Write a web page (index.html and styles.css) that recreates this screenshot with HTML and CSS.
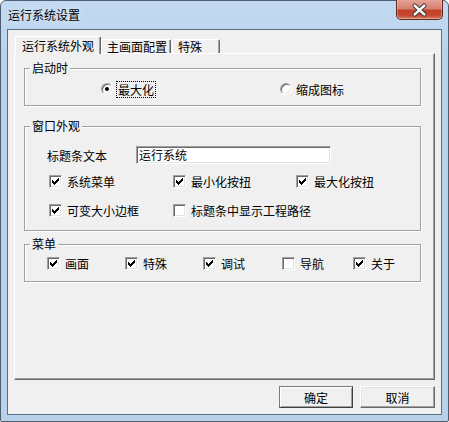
FILE: index.html
```html
<!DOCTYPE html>
<html lang="zh-CN">
<head>
    <meta charset="UTF-8">
    <meta name="viewport" content="width=device-width, initial-scale=1.0">
    <title>运行系统设置</title>
    <link rel="stylesheet" href="styles.css">
</head>
<body>
    <div class="window">
        <div class="titlebar">
            <span class="title">运行系统设置</span>
            <button class="close-btn" title="关闭">
                <svg width="47" height="20" viewBox="0 0 47 20">
                    <path d="M18.5 5.5 L28.5 14.5 M28.5 5.5 L18.5 14.5" stroke="#3a3a3a" stroke-width="4.6" stroke-linecap="round" fill="none"/>
                    <path d="M18.5 5.5 L28.5 14.5 M28.5 5.5 L18.5 14.5" stroke="#fff" stroke-width="2.6" stroke-linecap="round" fill="none"/>
                </svg>
            </button>
        </div>

        <div class="client">
            <!-- Tab strip -->
            <div class="tabs">
                <div class="tab active">运行系统外观</div>
                <div class="tab">主画面配置</div>
                <div class="tab last">特殊</div>
            </div>

            <div class="page">
                <!-- Startup -->
                <fieldset class="group">
                    <legend>启动时</legend>
                    <div class="startup">
                        <label class="radio-item wide">
                            <span class="radio checked"></span>
                            <span class="focus">最大化</span>
                        </label>
                        <label class="radio-item">
                            <span class="radio"></span>
                            <span>缩成图标</span>
                        </label>
                    </div>
                </fieldset>

                <!-- Window appearance -->
                <fieldset class="group appearance">
                    <legend>窗口外观</legend>
                    <div class="title-row">
                        <span class="field-label">标题条文本</span>
                        <div class="textbox">运行系统</div>
                    </div>
                    <div class="check-grid">
                        <label class="check-item"><span class="check"><svg class="tick" viewBox="0 0 7 7"><path d="M0 2 H1 V3 H2 V4 H3 V3 H4 V2 H5 V1 H6 V0 H7 V3 H6 V4 H5 V5 H4 V6 H3 V7 H2 V6 H1 V5 H0 Z"/></svg></span>系统菜单</label>
                        <label class="check-item"><span class="check"><svg class="tick" viewBox="0 0 7 7"><path d="M0 2 H1 V3 H2 V4 H3 V3 H4 V2 H5 V1 H6 V0 H7 V3 H6 V4 H5 V5 H4 V6 H3 V7 H2 V6 H1 V5 H0 Z"/></svg></span>最小化按扭</label>
                        <label class="check-item"><span class="check"><svg class="tick" viewBox="0 0 7 7"><path d="M0 2 H1 V3 H2 V4 H3 V3 H4 V2 H5 V1 H6 V0 H7 V3 H6 V4 H5 V5 H4 V6 H3 V7 H2 V6 H1 V5 H0 Z"/></svg></span>最大化按扭</label>
                        <label class="check-item"><span class="check"><svg class="tick" viewBox="0 0 7 7"><path d="M0 2 H1 V3 H2 V4 H3 V3 H4 V2 H5 V1 H6 V0 H7 V3 H6 V4 H5 V5 H4 V6 H3 V7 H2 V6 H1 V5 H0 Z"/></svg></span>可变大小边框</label>
                        <label class="check-item"><span class="check"></span>标题条中显示工程路径</label>
                    </div>
                </fieldset>

                <!-- Menus -->
                <fieldset class="group menus">
                    <legend>菜单</legend>
                    <div class="menu-row">
                        <label class="check-item w78"><span class="check"><svg class="tick" viewBox="0 0 7 7"><path d="M0 2 H1 V3 H2 V4 H3 V3 H4 V2 H5 V1 H6 V0 H7 V3 H6 V4 H5 V5 H4 V6 H3 V7 H2 V6 H1 V5 H0 Z"/></svg></span>画面</label>
                        <label class="check-item w78"><span class="check"><svg class="tick" viewBox="0 0 7 7"><path d="M0 2 H1 V3 H2 V4 H3 V3 H4 V2 H5 V1 H6 V0 H7 V3 H6 V4 H5 V5 H4 V6 H3 V7 H2 V6 H1 V5 H0 Z"/></svg></span>特殊</label>
                        <label class="check-item w79"><span class="check"><svg class="tick" viewBox="0 0 7 7"><path d="M0 2 H1 V3 H2 V4 H3 V3 H4 V2 H5 V1 H6 V0 H7 V3 H6 V4 H5 V5 H4 V6 H3 V7 H2 V6 H1 V5 H0 Z"/></svg></span>调试</label>
                        <label class="check-item w71"><span class="check"></span>导航</label>
                        <label class="check-item"><span class="check"><svg class="tick" viewBox="0 0 7 7"><path d="M0 2 H1 V3 H2 V4 H3 V3 H4 V2 H5 V1 H6 V0 H7 V3 H6 V4 H5 V5 H4 V6 H3 V7 H2 V6 H1 V5 H0 Z"/></svg></span>关于</label>
                    </div>
                </fieldset>
            </div>

            <div class="actions">
                <button class="btn default">确定</button>
                <button class="btn">取消</button>
            </div>
        </div>
    </div>
</body>
</html>
```

FILE: styles.css
```css
body {
    margin: 0;
    background: #fff;
    font-family: "Noto Sans CJK SC", "Liberation Sans", sans-serif;
    font-size: 12px;
    color: #000;
}

.window {
    width: 449px;
    height: 422px;
    box-sizing: border-box;
    border: 1px solid #4d5d6e;
    border-radius: 6px 6px 2px 2px;
    background: linear-gradient(#c3daf2, #b9d2ec 60px);
    padding: 0 6px 6px 6px;
    display: flex;
    flex-direction: column;
}

.titlebar {
    height: 28px;
    display: flex;
    justify-content: space-between;
    align-items: flex-start;
    margin: 0 -6px;
}

.title {
    margin: 6px 0 0 7px;
    line-height: 16px;
    text-shadow: 0 0 6px #e6f0fa;
}

.close-btn {
    width: 47px;
    height: 20px;
    margin: -1px 5px 0 0;
    padding: 0;
    border: 1px solid #5e2a22;
    border-top: none;
    border-radius: 0 0 5px 5px;
    background: linear-gradient(#e6a395, #d88070 45%, #c24229 55%, #c9472f 80%, #d97a62);
    box-shadow: inset 0 -1px 0 rgba(255, 255, 255, 0.35), inset 1px 0 0 rgba(255, 255, 255, 0.25), inset -1px 0 0 rgba(255, 255, 255, 0.25);
    display: flex;
    cursor: pointer;
}

.client {
    flex: 1;
    border: 1px solid #5e6e7e;
    background: #f0f0f0;
    display: flex;
    flex-direction: column;
}

/* tabs */
.tabs {
    height: 17px;
    margin: 6px 0 0 7px;
    display: flex;
    align-items: flex-end;
}

.tab {
    height: 14px;
    box-sizing: border-box;
    padding-left: 5px;
    border-style: solid;
    border-width: 1px 1px 0 1px;
    border-color: #fff #696969 #fff #fff;
    box-shadow: inset -1px 0 #a0a0a0;
    border-radius: 2px 2px 0 0;
    background: #f0f0f0;
    line-height: 14px;
    width: 70px;
    white-space: nowrap;
}

.tab.active {
    width: 86px;
    height: 18px;
    margin-bottom: -1px;
    padding: 2px 0 0 6px;
    position: relative;
    z-index: 1;
}

.tab.last {
    width: 48px;
    margin-left: 1px;
}

.page {
    width: 421px;
    height: 327px;
    box-sizing: border-box;
    margin-left: 6px;
    border: 1px solid;
    border-color: #fff #696969 #696969 #fff;
    box-shadow: inset -1px -1px #a0a0a0;
    padding-top: 7px;
}

/* group boxes */
.group {
    width: 397px;
    box-sizing: border-box;
    margin: 0 0 0 9px;
    padding: 0;
    border: 1px solid #a0a0a0;
    box-shadow: inset 1px 1px #fff, 1px 1px #fff;
    min-width: 0;
}

.group legend {
    margin-left: 5px;
    padding: 0 2px;
    line-height: 14px;
    background: #f0f0f0;
}

.startup {
    display: flex;
    align-items: center;
    height: 14px;
    padding: 7px 0 9px 76px;
}

.radio-item {
    display: flex;
    align-items: center;
    gap: 4px;
    line-height: 13px;
}

.radio-item.wide {
    width: 179px;
}

.radio {
    width: 12px;
    height: 12px;
    box-sizing: border-box;
    border-radius: 50%;
    border: 1px solid;
    border-color: #a0a0a0 #fff #fff #a0a0a0;
    box-shadow: inset 1px 1px #696969, inset -1px -1px #e3e3e3;
    background: #fff;
    display: flex;
    align-items: center;
    justify-content: center;
}

.radio.checked::after {
    content: "";
    width: 4px;
    height: 4px;
    border-radius: 50%;
    background: #000;
}

.focus {
    padding: 1px 1px;
    outline: 1px dotted #000;
}

.appearance {
    margin-top: 13px;
    padding-bottom: 13px;
}

.title-row {
    display: flex;
    align-items: center;
    margin: 13px 0 0 22px;
    height: 18px;
}

.field-label {
    width: 89px;
}

.textbox {
    width: 195px;
    height: 18px;
    box-sizing: border-box;
    border: 1px solid;
    border-color: #a0a0a0 #fff #fff #a0a0a0;
    box-shadow: inset 1px 1px #696969, inset -1px -1px #e3e3e3;
    background: #fff;
    padding-left: 2px;
    line-height: 16px;
}

.check-grid {
    display: grid;
    grid-template-columns: 124px 123px auto;
    row-gap: 16px;
    margin: 11px 0 0 24px;
}

.check-item {
    display: flex;
    align-items: center;
    gap: 5px;
    height: 13px;
    line-height: 13px;
    white-space: nowrap;
}

.check {
    width: 13px;
    height: 13px;
    box-sizing: border-box;
    flex-shrink: 0;
    border: 1px solid;
    border-color: #a0a0a0 #fff #fff #a0a0a0;
    box-shadow: inset 1px 1px #696969, inset -1px -1px #e3e3e3;
    background: #fff;
    display: flex;
    align-items: center;
    justify-content: center;
}

.tick {
    display: block;
    width: 7px;
    height: 7px;
    fill: #000;
    shape-rendering: crispEdges;
}

.menus {
    margin-top: 6px;
}

.menu-row {
    display: flex;
    padding: 6px 0 11px 22px;
}

.w78 { width: 78px; }
.w79 { width: 79px; }
.w71 { width: 71px; }

/* dialog buttons */
.actions {
    display: flex;
    justify-content: flex-end;
    gap: 7px;
    margin: 6px 6px 0 0;
}

.btn {
    width: 75px;
    height: 22px;
    box-sizing: border-box;
    padding: 0;
    font: inherit;
    color: #000;
    background: #f0f0f0;
    border: 1px solid;
    border-color: #fff #696969 #696969 #fff;
    box-shadow: inset -1px -1px #a0a0a0, inset 1px 1px #e3e3e3;
    cursor: pointer;
}

.btn.default {
    width: 74px;
    border-color: #7a7a7a #404040 #404040 #7a7a7a;
    box-shadow: inset 1px 1px #fff, inset -1px -1px #a0a0a0;
}
```
